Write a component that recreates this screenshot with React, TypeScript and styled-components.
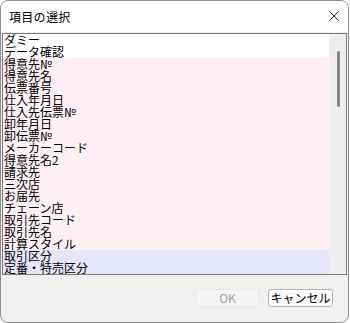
import { createGlobalStyle } from 'styled-components';
import styled from 'styled-components';

const GlobalStyle = createGlobalStyle`
  html, body {
    margin: 0;
    padding: 0;
    background: #ffffff;
  }
  * {
    box-sizing: border-box;
  }
`;

const FONT = `"Noto Sans CJK JP", "Noto Sans", sans-serif`;

const Window = styled.div`
  width: 349px;
  height: 323px;
  border: 1px solid #8e8e8e;
  border-radius: 8px;
  overflow: hidden;
  display: flex;
  flex-direction: column;
  background: #f0f0f0;
  font-family: ${FONT};
`;

const TitleBar = styled.div`
  height: 31px;
  flex-shrink: 0;
  display: flex;
  align-items: center;
  justify-content: space-between;
  padding-left: 8px;
  padding-right: 8px;
  background: #ffffff;
`;

const Title = styled.span`
  font-size: 12px;
  color: #000000;
  letter-spacing: 0.3px;
`;

const CloseButton = styled.button`
  width: 20px;
  height: 20px;
  padding: 0;
  border: none;
  background: transparent;
  display: flex;
  align-items: center;
  justify-content: center;
  margin-right: -4px;
  margin-top: -1px;
`;

const Body = styled.div`
  flex: 1;
  display: flex;
  flex-direction: column;
  padding: 1px 1px 0 1px;
`;

const ListBox = styled.div`
  height: 242px;
  border: 1px solid #7a7a7a;
  background: #ffffff;
  display: flex;
`;

const Items = styled.div`
  flex: 1;
  display: flex;
  flex-direction: column;
  overflow: hidden;
`;

type Tone = 'plain' | 'pink' | 'blue';

const toneColors: Record<Tone, string> = {
  plain: '#ffffff',
  pink: '#fff0f5',
  blue: '#e6e6fa',
};

const Row = styled.div<{ $tone: Tone }>`
  height: 12px;
  flex-shrink: 0;
  padding-left: 1px;
  font-size: 12px;
  line-height: 12px;
  color: #000000;
  white-space: nowrap;
  background: ${(p) => toneColors[p.$tone]};
`;

const ScrollTrack = styled.div`
  width: 17px;
  flex-shrink: 0;
  background: #eeeeee;
  display: flex;
  justify-content: center;
  padding-top: 17px;
  padding-left: 1px;
`;

const Thumb = styled.div`
  width: 3px;
  height: 56px;
  border-radius: 2px;
  background: #858585;
`;

const Footer = styled.div`
  display: flex;
  justify-content: flex-end;
  gap: 9px;
  padding: 14px 14px 0 0;
`;

const DialogButton = styled.button<{ $width: number }>`
  width: ${(p) => p.$width}px;
  height: 18px;
  padding: 0;
  border-radius: 3px;
  font-family: ${FONT};
  font-size: 12px;
  line-height: 16px;
  border: 1px solid #b5b5b5;
  background: #fdfdfd;
  color: #000000;
  &:disabled {
    border-color: #e8e8e8;
    background: #f5f5f5;
    color: #a2a2a2;
  }
`;

const items: { label: string; tone: Tone }[] = [
  { label: 'ダミー', tone: 'plain' },
  { label: 'データ確認', tone: 'plain' },
  { label: '得意先№', tone: 'pink' },
  { label: '得意先名', tone: 'pink' },
  { label: '伝票番号', tone: 'pink' },
  { label: '仕入年月日', tone: 'pink' },
  { label: '仕入先伝票№', tone: 'pink' },
  { label: '卸年月日', tone: 'pink' },
  { label: '卸伝票№', tone: 'pink' },
  { label: 'メーカーコード', tone: 'pink' },
  { label: '得意先名2', tone: 'pink' },
  { label: '請求先', tone: 'pink' },
  { label: '三次店', tone: 'pink' },
  { label: 'お届先', tone: 'pink' },
  { label: 'チェーン店', tone: 'pink' },
  { label: '取引先コード', tone: 'pink' },
  { label: '取引先名', tone: 'pink' },
  { label: '計算スタイル', tone: 'pink' },
  { label: '取引区分', tone: 'blue' },
  { label: '定番・特売区分', tone: 'blue' },
];

const App = () => (
  <>
    <GlobalStyle />
    <Window>
      <TitleBar>
        <Title>項目の選択</Title>
        <CloseButton aria-label="閉じる">
          <svg width="10" height="10" viewBox="0 0 10 10">
            <path d="M0.5 0.5 L9.5 9.5 M9.5 0.5 L0.5 9.5" stroke="#1a1a1a" strokeWidth="1" />
          </svg>
        </CloseButton>
      </TitleBar>
      <Body>
        <ListBox>
          <Items>
            {items.map((item) => (
              <Row key={item.label} $tone={item.tone}>
                {item.label}
              </Row>
            ))}
          </Items>
          <ScrollTrack>
            <Thumb />
          </ScrollTrack>
        </ListBox>
        <Footer>
          <DialogButton $width={63} disabled>
            OK
          </DialogButton>
          <DialogButton $width={65}>キャンセル</DialogButton>
        </Footer>
      </Body>
    </Window>
  </>
);

export default App;
